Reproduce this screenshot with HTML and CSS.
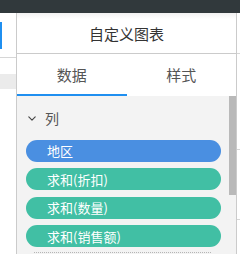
FILE: index.html
```html
<!DOCTYPE html>
<html lang="zh-CN">
<head>
  <meta charset="UTF-8">
  <meta name="viewport" content="width=device-width, initial-scale=1.0">
  <title>自定义图表</title>
  <link rel="stylesheet" href="styles.css">
</head>
<body>
  <div class="topbar"></div>
  <div class="workspace">
    <div class="sidebar">
      <div class="side-tab"><span class="side-mark"></span></div>
      <div class="side-row"></div>
      <div class="side-item"></div>
    </div>

    <div class="panel">
      <div class="panel-title">自定义图表</div>
      <div class="tabs">
        <div class="tab active">数据</div>
        <div class="tab">样式</div>
      </div>
      <div class="panel-body">
        <div class="fields">
          <div class="section-head">
            <svg class="chevron" viewBox="0 0 10 6" fill="none" stroke="currentColor" stroke-width="1.4" stroke-linecap="round" stroke-linejoin="round">
              <polyline points="1,1 5,5 9,1"></polyline>
            </svg>
            <span>列</span>
          </div>
          <div class="pill pill-dim">地区</div>
          <div class="pill pill-measure">求和(折扣)</div>
          <div class="pill pill-measure">求和(数量)</div>
          <div class="pill pill-measure">求和(销售额)</div>
          <div class="next-section"></div>
        </div>
        <div class="scroll-track">
          <div class="scroll-thumb"></div>
        </div>
      </div>
    </div>

    <div class="edge">
      <div class="edge-cell first"></div>
      <div class="edge-cell second"></div>
      <div class="edge-cell third"></div>
    </div>
  </div>
</body>
</html>
```

FILE: styles.css
```css
:root {
  --color-topbar: #31393c;
  --color-border: #cbcbcb;
  --color-body: #f3f3f3;
  --color-text: #333333;
  --color-muted: #555555;
  --color-primary: #1f8ff0;
  --color-dimension: #4a8fe1;
  --color-measure: #41bfa4;
  --color-thumb: #b9b9b9;
  --font-sans: "Noto Sans CJK SC", "Noto Sans", sans-serif;
}

* {
  margin: 0;
  padding: 0;
  box-sizing: border-box;
}

body {
  width: 240px;
  height: 254px;
  overflow: hidden;
  background: #ffffff;
  font-family: var(--font-sans);
  color: var(--color-text);
}

.topbar {
  height: 13px;
  background: var(--color-topbar);
}

.workspace {
  display: flex;
  height: 241px;
}

/* left column, mostly cut off */
.sidebar {
  width: 17px;
  flex-shrink: 0;
  border-right: 1px solid var(--color-border);
  display: flex;
  flex-direction: column;
}

.side-tab {
  height: 45px;
  padding-top: 9px;
  border-bottom: 1px solid #d6d6d6;
}

.side-mark {
  display: block;
  width: 2px;
  height: 27px;
  background: var(--color-primary);
}

.side-row {
  height: 16px;
}

.side-item {
  height: 15px;
  background: #ebebeb;
}

.panel {
  width: 220px;
  flex-shrink: 0;
  border-right: 1px solid var(--color-border);
  display: flex;
  flex-direction: column;
}

.panel-title {
  height: 41px;
  border-bottom: 1px solid var(--color-border);
  display: flex;
  align-items: center;
  justify-content: center;
  font-size: 15px;
  color: var(--color-text);
  background: linear-gradient(#f1f1f1, #ffffff 6px);
}

.tabs {
  display: flex;
  height: 42px;
}

.tab {
  flex: 1;
  display: flex;
  align-items: center;
  justify-content: center;
  font-size: 15px;
  color: var(--color-muted);
  border-bottom: 2px solid transparent;
}

.tab.active {
  border-bottom-color: var(--color-primary);
}

.panel-body {
  flex: 1;
  display: flex;
  background: var(--color-body);
  overflow: hidden;
}

.fields {
  flex: 1;
  padding: 7px 8px 0 9px;
}

.section-head {
  height: 30px;
  display: flex;
  align-items: center;
  gap: 9px;
  padding-left: 2px;
  font-size: 14px;
  color: var(--color-muted);
}

.chevron {
  width: 8px;
  height: 5px;
  color: #444444;
}

.pill {
  height: 22px;
  margin-top: 6.5px;
  padding-left: 21px;
  border-radius: 11px;
  display: flex;
  align-items: center;
  font-size: 13px;
  color: #ffffff;
  white-space: nowrap;
  overflow: hidden;
}

.pill-dim {
  background: var(--color-dimension);
}

.pill-measure {
  background: var(--color-measure);
}

.next-section {
  margin: 5px 10px 0 8px;
  border-top: 1px dotted #b5b5b5;
}

.scroll-track {
  width: 7px;
  flex-shrink: 0;
}

.scroll-thumb {
  height: 99px;
  background: var(--color-thumb);
}

/* sliver of the next column on the right */
.edge {
  flex: 1;
  display: flex;
  flex-direction: column;
}

.edge-cell {
  border-bottom: 1px solid #d6d6d6;
}

.edge-cell.first {
  height: 41px;
}

.edge-cell.second {
  height: 96px;
}

.edge-cell.third {
  height: 70px;
}
```
